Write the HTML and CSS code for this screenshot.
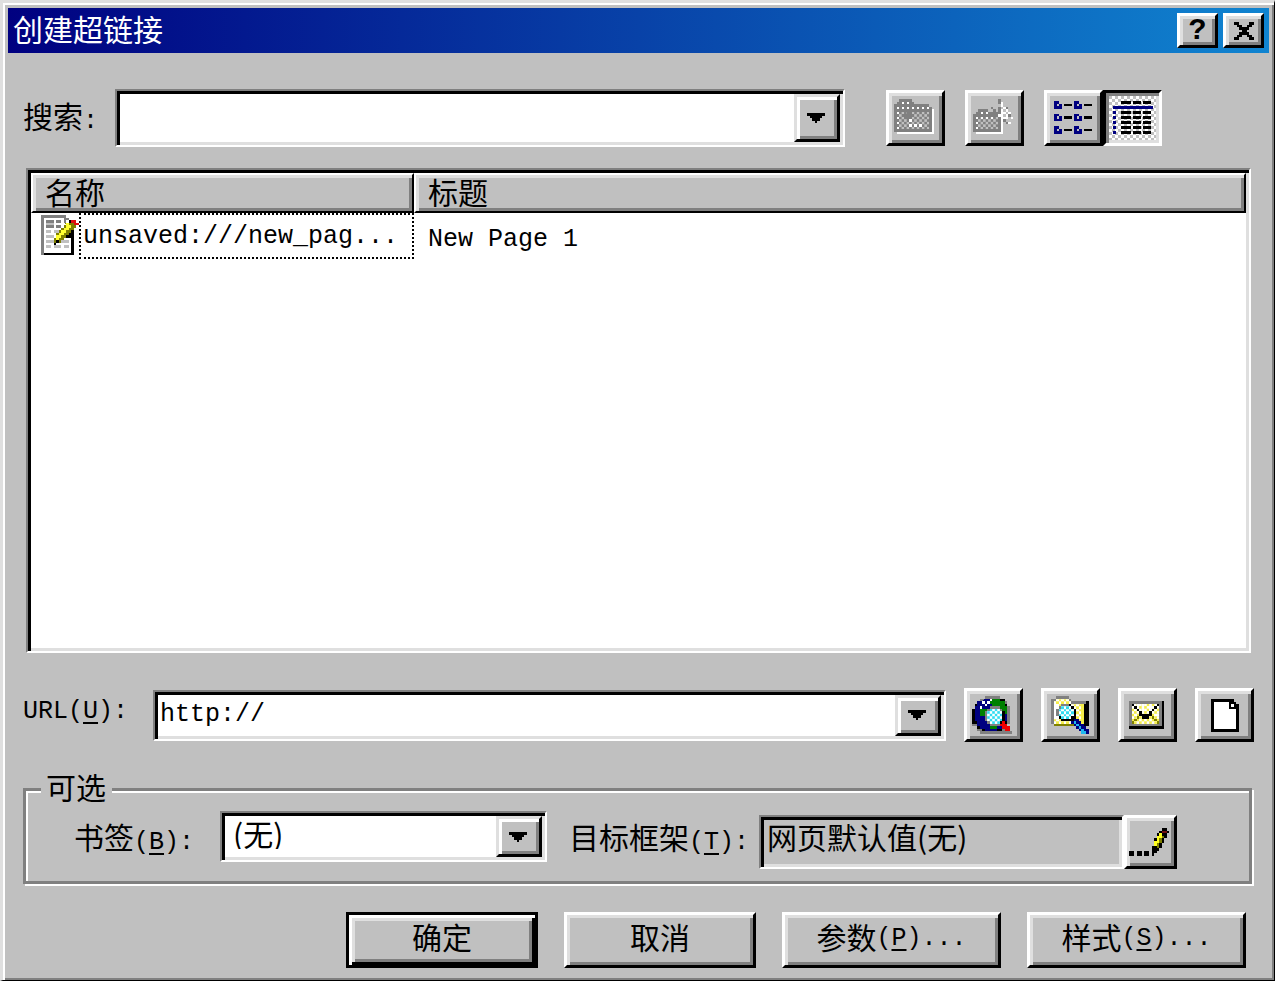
FILE: index.html
```html
<!DOCTYPE html>
<html lang="zh-CN">
<head>
    <meta charset="UTF-8">
    <meta name="viewport" content="width=device-width, initial-scale=1.0">
    <title>创建超链接</title>
    <link rel="stylesheet" href="styles.css">
</head>
<body>
    <!-- shared dither patterns -->
    <svg class="defs" width="0" height="0" aria-hidden="true">
        <defs>
            <pattern id="dither-gray" width="2" height="2" patternUnits="userSpaceOnUse">
                <path fill="#808080" d="M0 0h2v2h-2z"/>
                <path fill="#c0c0c0" d="M0 0h1v1h-1zM1 1h1v1h-1z"/>
            </pattern>
            <pattern id="dither-yellow" width="2" height="2" patternUnits="userSpaceOnUse">
                <path fill="#fff" d="M0 0h2v2h-2z"/>
                <path fill="#f4ec4a" d="M0 0h1v1h-1zM1 1h1v1h-1z"/>
            </pattern>
            <pattern id="dither-cyan" width="2" height="2" patternUnits="userSpaceOnUse">
                <path fill="#fff" d="M0 0h2v2h-2z"/>
                <path fill="#30dcf0" d="M0 0h1v1h-1zM1 1h1v1h-1z"/>
            </pattern>
        </defs>
    </svg>

    <div class="dialog">
        <header class="titlebar">
            <h1>创建超链接</h1>
            <button type="button" class="btn caption" aria-label="帮助">?</button>
            <button type="button" class="btn caption" aria-label="关闭">
                <svg width="20" height="18" viewBox="0 0 8 7"><path d="M0 0h2v1h1v1h2v-1h1v-1h2v1h-1v1h-1v1h-1v1h1v1h1v1h1v1h-2v-1h-1v-1h-2v1h-1v1h-2v-1h1v-1h1v-1h1v-1h-1v-1h-1v-1h-1z"/></svg>
            </button>
        </header>

        <form class="content" onsubmit="return false">
            <div class="row search-row">
                <label for="search">搜索<span class="en">:</span></label>
                <div class="combo tall">
                    <select id="search"><option></option></select>
                    <span class="arrow"><svg width="20" height="10" viewBox="0 0 8 4"><path d="M0 0h7v1h-1v1h-1v1h-1v1h-1v-1h-1v-1h-1v-1h-1z"/></svg></span>
                </div>
                <div class="tools">
                    <button type="button" class="btn tool" aria-label="向上一级" disabled>
                        <svg width="43" height="38" viewBox="0 0 17 15">
                            <path fill="#fff" d="M15 4h1v10h-15v-1h14z"/>
                            <path fill="#808080" d="M2 0h5v1h1v1h6v1h1v10h-15v-11h1v-1h1z"/>
                            <path fill="url(#dither-gray)" d="M2 5h12v7h-12z"/>
                            <path fill="#fff" d="M3 1h1v1h-1zM5 1h1v1h-1zM1 3h1v1h-1zM3 3h1v1h-1zM5 3h1v1h-1zM7 3h1v1h-1zM9 3h1v1h-1zM11 3h1v1h-1zM13 3h1v1h-1zM1 5h1v1h-1zM1 7h1v1h-1zM1 9h1v1h-1zM1 11h1v1h-1zM6 8h1v1h-1zM6 10h1v1h-1zM8 10h1v1h-1zM10 10h1v1h-1z"/>
                            <path fill="#808080" d="M5 5h2v1h1v1h-1v1h-1v1h-1v-1h-1v-1h-1v-1h2z"/>
                        </svg>
                    </button>
                    <button type="button" class="btn tool" aria-label="新建文件夹" disabled>
                        <svg width="43" height="38" viewBox="0 0 17 15">
                            <path fill="#fff" d="M11 7h1v7h-11v-1h10z"/>
                            <path fill="#808080" d="M2 4h4v1h5v8h-11v-7h1v-1h1z"/>
                            <path fill="url(#dither-gray)" d="M2 7h8v5h-8z"/>
                            <path fill="#fff" d="M3 5h1v1h-1zM5 5h1v1h-1zM1 7h1v1h-1zM3 7h1v1h-1zM5 7h1v1h-1zM7 7h1v1h-1zM1 9h1v1h-1zM1 11h1v1h-1zM11 1h1v2h-1zM12 3h1v1h-1zM11 4h1v2h-1zM13 4h1v1h-1zM10 6h2v1h-2zM12 5h1v1h-1zM14 5h1v1h-1zM13 6h1v1h-1zM15 7h1v1h-1zM12 7h2v1h-2zM14 9h1v1h-1z"/>
                            <path fill="#808080" d="M10 0h1v2h-1zM7 3h1v1h1v1h-1v-1h-1zM10 3h1v2h-1zM13 3h1v1h-1zM9 5h1v1h-1zM14 6h1v1h-1zM10 8h1v1h-1zM12 8h1v1h-1zM13 9h1v1h-1z"/>
                        </svg>
                    </button>
                    <div class="views">
                        <button type="button" class="btn tool" aria-label="列表">
                            <svg width="40" height="35" viewBox="0 0 16 14">
                                <path fill="#000080" fill-rule="evenodd" d="M0 0h2v1h1v2h-3zM1 1v1h1v-1zM8 0h2v1h1v2h-3zM9 1v1h1v-1zM0 5h2v1h1v2h-3zM1 6v1h1v-1zM8 5h2v1h1v2h-3zM9 6v1h1v-1zM0 10h2v1h1v2h-3zM1 11v1h1v-1zM8 10h2v1h1v2h-3zM9 11v1h1v-1z"/>
                                <path d="M4 1h3v1h-3zM12 1h3v1h-3zM4 6h3v1h-3zM12 6h3v1h-3zM4 11h3v1h-3zM12 11h3v1h-3z"/>
                            </svg>
                        </button>
                        <button type="button" class="btn tool pressed" aria-label="详细资料" aria-pressed="true">
                            <svg width="40" height="35" viewBox="0 0 16 14">
                                <path fill="#000080" d="M0 2h16v1h-16zM0 4h1v1h-1zM0 6h1v1h-1zM0 8h1v1h-1zM0 10h1v1h-1zM0 12h1v1h-1z"/>
                                <path d="M3 0h4v1h-4zM8 0h3v1h-3zM12 0h3v1h-3zM3 4h4v1h-4zM8 4h3v1h-3zM12 4h3v1h-3zM3 6h4v1h-4zM8 6h3v1h-3zM12 6h3v1h-3zM3 8h4v1h-4zM8 8h3v1h-3zM12 8h3v1h-3zM3 10h4v1h-4zM8 10h3v1h-3zM12 10h3v1h-3zM3 12h4v1h-4zM8 12h3v1h-3zM12 12h3v1h-3z"/>
                            </svg>
                        </button>
                    </div>
                </div>
            </div>

            <div class="list">
                <table>
                    <thead>
                        <tr>
                            <th class="name">名称</th>
                            <th>标题</th>
                        </tr>
                    </thead>
                    <tbody>
                        <tr>
                            <td class="name">
                                <div class="file">
                                    <svg width="38" height="43" viewBox="0 0 15 17">
                                        <path fill="#808080" d="M0 0h10v1h-9v15h-1z"/>
                                        <path fill="#fff" d="M1 1h8v2h3v12h-11z"/>
                                        <path d="M12 4h1v12h-12v-1h11z"/>
                                        <path fill="#808080" d="M9 0h1v1h1v1h-1v1h-1zM2 2h3v1h-3zM6 2h2v1h-2zM2 4h3v1h-3zM6 4h2v1h-2z"/>
                                        <path fill="#c0c0c0" d="M2 3h3v1h-3zM2 6h2v1h-2zM5 6h3v1h-3zM2 8h3v1h-3zM2 10h3v1h-3zM8 10h3v1h-3zM2 12h2v1h-2zM5 12h3v1h-3zM9 12h2v1h-2z"/>
                                        <path fill="#000080" d="M9 8h2v1h-2z"/>
                                        <!-- pencil -->
                                        <path d="M12 4h2v1h-1v1h-1v1h-1v1h-1v1h-1v1h-1v1h-2v-2h6z"/>
                                        <path fill="#808000" d="M9 3h2v-1h1v1h1v1h1v1h-1v1h-1v1h-1v1h-1v1h-1v1h-1v1h-3v-2h1v-2h1v-1h1v-1h1v-1h1z"/>
                                        <path fill="#ffff30" d="M10 3h1v1h1v1h-1v1h-1v1h-1v1h-1v1h-1v1h-1v-2h1v-1h1v-1h1v-1h1z"/>
                                        <path d="M5 11h1v-1h1v1h-1v1h-1zM11 2h1v1h-1z"/>
                                        <path fill="#e01010" d="M12 2h2v1h1v1h-2v-1h-1z"/>
                                    </svg>
                                    <a href="#" class="en">unsaved:///new_pag...</a>
                                </div>
                            </td>
                            <td><span class="en">New Page 1</span></td>
                        </tr>
                    </tbody>
                </table>
            </div>

            <div class="row url-row">
                <label for="url" class="en">URL(<u>U</u>):</label>
                <div class="combo">
                    <input type="text" id="url" class="en" value="http://">
                    <button type="button" class="arrow" aria-label="打开"><svg width="20" height="10" viewBox="0 0 8 4"><path d="M0 0h7v1h-1v1h-1v1h-1v1h-1v-1h-1v-1h-1v-1h-1z"/></svg></button>
                </div>
                <div class="links">
                    <button type="button" class="btn tool" aria-label="浏览网页">
                        <svg width="43" height="38" viewBox="0 0 17 15">
                            <path fill="#808080" d="M5 0h6v1h2v1h1v2h1v7h-1v3h2v1h-13v-1h-1v-2h-2v-2h1v-6h1v-2h1v-1h2z"/>
                            <path d="M5 1h8v2h1v8h-1v2h-1v1h-8v-1h-2v-2h-2v-6h1v-2h1v-1h2z"/>
                            <path fill="#000080" d="M5 1h6v1h2v2h1v6h-1v2h-1v1h-2v1h-5v-1h-2v-1h-1v-2h-1v-6h1v-2h2z"/>
                            <path fill="#008000" d="M8 1h3v1h2v2h1v3h-2v-1h-2v-2h-2v-1h-1v-1h1zM3 5h3v1h-1v2h-2zM7 12h3v1h-3z"/>
                            <path fill="#fff" d="M7 1h1v1h-1zM6 2h1v1h-1zM4 2h1v1h-1zM5 3h1v1h-1zM3 4h1v1h-1z"/>
                            <path fill="#808080" d="M7 4h4v1h1v1h1v4h-1v1h-1v1h-4v-1h-1v-1h-1v-4h1v-1h1z"/>
                            <path fill="url(#dither-cyan)" d="M7 5h4v1h1v4h-1v1h-4v-1h-1v-4h1z"/>
                            <path d="M12 6h1v4h-1zM11 10h1v1h-1zM13 11h1v1h-1z"/>
                            <path fill="#f00000" d="M12 10h1v1h1v1h1v2h-2v-1h-1v-1h-1v-1h1z"/>
                        </svg>
                    </button>
                    <button type="button" class="btn tool" aria-label="浏览文件">
                        <svg width="40" height="38" viewBox="0 0 16 15">
                            <path d="M13 2h2v10h-14v-1h12z"/>
                            <path fill="#808080" d="M2 0h5v1h1v1h6v1h-1v8h-13v-10h2z"/>
                            <path fill="url(#dither-yellow)" d="M2 1h5v1h1v1h5v8h-12v-9h1z"/>
                            <path fill="#f4ec4a" d="M12 3h1v7h-1zM8 10h5v1h-5z"/>
                            <path fill="#fff" d="M1 3h2v6h-2z"/>
                            <path fill="#808000" d="M1 11h8v1h-8z"/>
                            <path d="M4 3h4v1h1v1h1v4h-1v1h-5v-1h-1v-1h-1v-3h1v-1h1z"/>
                            <path fill="#808080" d="M4 3h3v1h-3zM3 4h1v1h-1zM2 5h1v3h-1z"/>
                            <path fill="url(#dither-cyan)" d="M4 4h4v1h1v3h-1v1h-4v-1h-1v-3h1z"/>
                            <path fill="#000080" d="M9 9h2v1h1v1h1v1h1v1h1v2h-3v-1h-1v-1h-1v-1h-1v-1h-1v-1h1z"/>
                            <path fill="#20b8f0" d="M9 10h1v1h-1zM10 11h1v1h-1zM11 12h1v1h-1zM12 13h1v1h-1zM12 14h2v1h-2z"/>
                        </svg>
                    </button>
                    <button type="button" class="btn tool" aria-label="电子邮件">
                        <svg width="38" height="28" viewBox="0 0 15 11">
                            <path d="M13 0h1v11h-14v-1h13z"/>
                            <path fill="#808080" d="M0 0h13v10h-13z"/>
                            <path fill="url(#dither-yellow)" d="M1 1h11v8h-11z"/>
                            <path fill="#fff" d="M3 1h1v2h-1zM5 1h1v3h-1zM8 2h1v2h-1zM2 5h1v1h-1zM10 5h2v1h-2z"/>
                            <path fill="#808000" d="M3 6h1v1h-1zM2 7h1v1h-1zM1 8h1v1h-1zM9 6h1v1h-1zM10 7h1v1h-1zM11 8h1v1h-1z"/>
                            <path d="M1 1h1v1h-1zM2 2h1v1h-1zM3 3h1v1h-1zM4 4h1v1h-1zM5 5h3v1h-3zM8 4h1v1h-1zM9 3h1v1h-1zM10 2h1v1h-1zM11 1h1v1h-1zM4 5h1v1h-1zM8 5h1v1h-1zM5 6h3v1h-3z"/>
                        </svg>
                    </button>
                    <button type="button" class="btn tool" aria-label="新建网页">
                        <svg width="28" height="33" viewBox="0 0 11 13">
                            <path d="M0 0h9v1h1v1h1v11h-11z"/>
                            <path fill="#fff" d="M1 1h6v3h3v8h-9zM8 2h1v1h-1z"/>
                        </svg>
                    </button>
                </div>
            </div>

            <fieldset>
                <legend>可选</legend>
                <div class="row">
                    <label for="bookmark">书签<span class="en">(<u>B</u>):</span></label>
                    <div class="combo bookmark">
                        <select id="bookmark"><option>(无)</option></select>
                        <span class="arrow"><svg width="20" height="10" viewBox="0 0 8 4"><path d="M0 0h7v1h-1v1h-1v1h-1v1h-1v-1h-1v-1h-1v-1h-1z"/></svg></span>
                    </div>
                    <label for="target">目标框架<span class="en">(<u>T</u>):</span></label>
                    <div class="target">
                        <input type="text" id="target" value="网页默认值(无)" readonly>
                        <button type="button" class="btn" aria-label="更改目标框架">
                            <svg width="43" height="28" viewBox="0 0 17 11">
                                <path d="M0 9h2v2h-2zM3 9h2v2h-2zM6 9h2v2h-2zM13 0h2v1h1v1h-1v2h-1v2h-1v2h-1v1h-1v1h-1v1h-1v-4h1v-3h1v-2h1v-1h1z"/>
                                <path fill="#ffff20" d="M12 2h1v2h-1v3h-2v-2h1v-2h1z"/>
                                <path fill="#808000" d="M13 3h1v1h-1v2h-1v2h-1v-2h1v-2h1z"/>
                                <path fill="#701010" d="M13 1h2v1h-2z"/>
                            </svg>
                        </button>
                    </div>
                </div>
            </fieldset>

            <div class="actions">
                <button type="submit" class="btn default">确定</button>
                <button type="button" class="btn">取消</button>
                <button type="button" class="btn wide">参数<span class="en">(<u>P</u>)...</span></button>
                <button type="button" class="btn wide">样式<span class="en">(<u>S</u>)...</span></button>
            </div>
        </form>
    </div>
</body>
</html>
```

FILE: styles.css
```css
* {
    box-sizing: border-box;
}
body {
    margin: 0;
    background: #c0c0c0;
}
body, button, input, select {
    font-family: "Noto Sans CJK SC", sans-serif;
    font-size: 30px;
    line-height: 32px;
    color: #000;
}
.en {
    font-family: "Liberation Mono", monospace;
    font-size: 25px;
}
u {
    text-underline-offset: 4px;
}
svg {
    display: block;
    shape-rendering: crispEdges;
}
.defs {
    position: absolute;
}

/* window */
.dialog {
    display: flex;
    flex-direction: column;
    min-height: 100vh;
    padding: 5px;
    background: #c0c0c0;
    border-style: solid;
    border-width: 3px 1px 1px 3px;
    border-color: #dfdfdf #000 #000 #dfdfdf;
    box-shadow: inset 2px 2px #fff, inset -2px -2px #808080;
}
.titlebar {
    display: flex;
    align-items: center;
    gap: 5px;
    height: 45px;
    padding: 0 5px;
    background: linear-gradient(to right, #000080, #1084d0);
}
.titlebar h1 {
    flex: 1;
    margin: 0;
    padding-bottom: 6px;
    font-size: 30px;
    font-weight: normal;
    color: #fff;
}
.content {
    flex: 1;
    display: flex;
    flex-direction: column;
    padding: 36px 15px 7px;
}

/* buttons */
.btn {
    display: flex;
    align-items: center;
    justify-content: center;
    padding: 0;
    background: #c0c0c0;
    border: 3px solid;
    border-color: #fff #000 #000 #fff;
    border-radius: 0;
    box-shadow: inset 3px 3px #dfdfdf, inset -3px -3px #808080;
}
.caption {
    width: 41px;
    height: 35px;
    font-family: "Liberation Mono", monospace;
    font-weight: bold;
}
.tool {
    width: 59px;
    height: 54px;
}
.pressed {
    background: repeating-conic-gradient(#fff 0 25%, #c0c0c0 0 50%) 0 0 / 6px 6px;
    border-color: #000 #fff #fff #000;
    box-shadow: inset 3px 3px #808080, inset -3px -3px #dfdfdf;
}

/* fields */
.row {
    display: flex;
    align-items: center;
}
.combo {
    position: relative;
    display: flex;
    flex: 1;
    height: 51px;
    padding: 3px;
    background: #fff;
    border: 2px solid;
    border-color: #808080 #fff #fff #808080;
    box-shadow: inset 3px 3px #000, inset -3px -3px #dfdfdf;
}
.tall {
    height: 58px;
}
.combo select, .combo input {
    flex: 1;
    min-width: 0;
    padding: 0 2px;
    background: transparent;
    border: 0;
    outline: 0;
    appearance: none;
}
.combo select {
    margin-top: -6px;
    padding: 0 8px 2px;
}
.arrow {
    display: flex;
    align-items: center;
    justify-content: center;
    width: 46px;
    padding: 0;
    background: #c0c0c0;
    border: 3px solid;
    border-color: #dfdfdf #000 #000 #dfdfdf;
    border-radius: 0;
    box-shadow: inset 3px 3px #fff, inset -3px -3px #808080;
}
select + .arrow {
    position: absolute;
    top: 3px;
    right: 3px;
    bottom: 3px;
    pointer-events: none;
}

.search-row label {
    width: 92px;
}
.search-row {
    padding-right: 92px;
}
.tools {
    display: flex;
    gap: 20px;
    margin-left: 41px;
}
.tools .tool {
    height: 56px;
}
.views {
    display: flex;
}

/* page list */
.list {
    flex: 1;
    margin: 21px 3px 35px;
    padding: 3px;
    background: #fff;
    border: 2px solid;
    border-color: #808080 #fff #fff #808080;
    box-shadow: inset 3px 3px #000, inset -3px -3px #dfdfdf;
}
table {
    width: 100%;
    border-collapse: separate;
    border-spacing: 0;
    table-layout: fixed;
}
th {
    height: 40px;
    padding: 0 12px 4px;
    font-weight: normal;
    line-height: 30px;
    text-align: left;
    background: #c0c0c0;
    border: 2px solid;
    border-color: #fff #000 #000 #fff;
    box-shadow: inset 3px 3px #dfdfdf, inset -3px -3px #808080;
}
td {
    padding: 0 14px;
}
th.name, td.name {
    width: 383px;
}
td.name {
    padding: 0 0 0 10px;
}
.file {
    display: flex;
    align-items: center;
}
.file a {
    flex: 1;
    height: 46px;
    padding-left: 2px;
    line-height: 44px;
    color: #000;
    text-decoration: none;
    border: 2px dotted #000;
}

.url-row label {
    width: 130px;
    padding-bottom: 6px;
}
.links {
    display: flex;
    gap: 18px;
    margin-left: 18px;
}

/* options */
fieldset {
    margin: 28px 2px 2px 0;
    padding: 7px 72px 12px 48px;
    border: 3px solid #808080;
    box-shadow: 2px 2px #fff, inset 2px 2px #fff;
}
legend {
    margin-left: -33px;
    padding: 0 6px 6px 5px;
    background: #c0c0c0;
}
fieldset label {
    flex: none;
    padding-bottom: 6px;
}
.bookmark {
    align-self: flex-start;
    margin: -4px 22px 0 26px;
}
.target {
    display: flex;
    flex: none;
    width: 418px;
    margin-left: 10px;
}
.target input {
    flex: 1;
    min-width: 0;
    height: 54px;
    padding: 0 6px 12px;
    background: #c0c0c0;
    border: 2px solid;
    border-color: #808080 #fff #fff #808080;
    border-radius: 0;
    outline: 0;
    box-shadow: inset 3px 3px #000, inset -3px -3px #dfdfdf;
}
.target .btn {
    width: 53px;
}

.actions {
    display: flex;
    justify-content: flex-end;
    gap: 26px;
    margin-top: 26px;
    padding-right: 8px;
}
.actions .btn {
    width: 192px;
    height: 56px;
    padding-bottom: 8px;
}
.actions .wide {
    width: 219px;
}
.actions .en {
    padding-top: 6px;
}
.actions .default {
    border-color: #000;
    box-shadow: inset 3px 3px #fff, inset -3px -3px #000, inset 6px 6px #dfdfdf, inset -6px -6px #808080;
}
```
